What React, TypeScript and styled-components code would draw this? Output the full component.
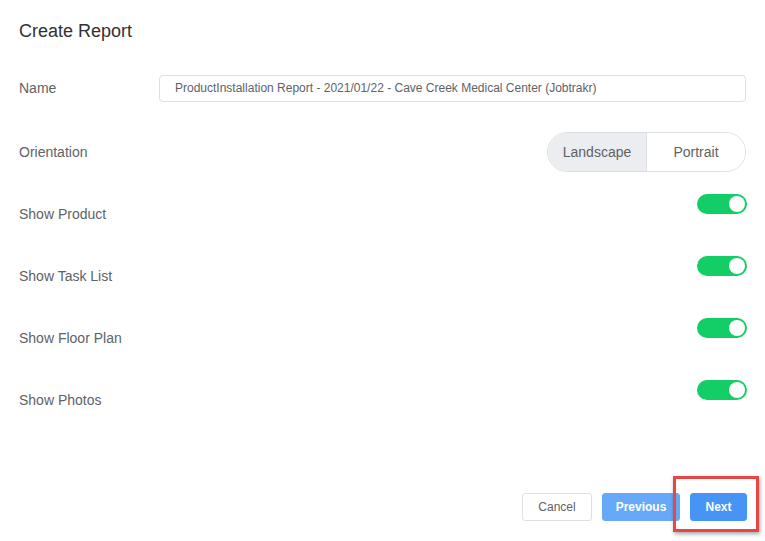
import styled, { createGlobalStyle } from 'styled-components';

const GlobalStyle = createGlobalStyle`
  html, body {
    margin: 0;
    padding: 0;
    background: #fff;
    font-family: "Liberation Sans", Arial, sans-serif;
  }
`

const Page = styled.div`
  position: relative;
  width: 765px;
  height: 541px;
  box-sizing: border-box;
  padding: 20px 19px 0 19px;
  display: flex;
  flex-direction: column;
  overflow: hidden;
`

const Title = styled.h1`
  margin: 0;
  font-size: 18px;
  font-weight: normal;
  color: #303133;
  line-height: 22px;
`

const Form = styled.div`
  margin-top: 26px;
  display: flex;
  flex-direction: column;
`

const Row = styled.div<{ $gap: number; $top?: boolean }>`
  display: flex;
  justify-content: space-between;
  align-items: ${(p) => (p.$top ? 'flex-start' : 'center')};
  height: 40px;
  margin-bottom: ${(p) => p.$gap}px;
`

const Label = styled.label`
  width: 140px;
  font-size: 14px;
  color: #606266;
  line-height: 40px;
  align-self: center;
`

const Input = styled.input`
  flex: 1;
  height: 27px;
  box-sizing: border-box;
  border: 1px solid #dcdfe6;
  border-radius: 4px;
  padding: 0 15px;
  font-family: inherit;
  font-size: 12px;
  color: #606266;
  outline: none;
`

const Segmented = styled.div`
  display: flex;
  height: 40px;
  width: 199px;
  box-sizing: border-box;
  border: 1px solid #dcdfe6;
  border-radius: 20px;
  overflow: hidden;
`

const Segment = styled.div<{ $active: boolean }>`
  flex: 1;
  display: flex;
  align-items: center;
  justify-content: center;
  font-size: 14px;
  color: #606266;
  background: ${(p) => (p.$active ? '#fff' : '#ebedf0')};
  border-left: ${(p) => (p.$active ? '1px solid #dcdfe6' : 'none')};
`

const Switch = styled.div<{ $on: boolean }>`
  width: 50px;
  height: 20px;
  border-radius: 10px;
  background: ${(p) => (p.$on ? '#13ce66' : '#dcdfe6')};
  position: relative;
  margin-right: -1px;
  &::after {
    content: '';
    position: absolute;
    top: 2px;
    left: ${(p) => (p.$on ? '32px' : '2px')};
    width: 16px;
    height: 16px;
    border-radius: 50%;
    background: #fff;
  }
`

const Footer = styled.div`
  margin-top: auto;
  margin-bottom: 20px;
  display: flex;
  justify-content: flex-end;
  gap: 10px;
  margin-right: -1px;
`

const Button = styled.button<{ $variant: 'default' | 'light' | 'primary' }>`
  height: 28px;
  box-sizing: border-box;
  padding: 0;
  border-radius: 3px;
  font-family: inherit;
  font-size: 12px;
  cursor: pointer;
  border: 1px solid
    ${(p) => (p.$variant === 'default' ? '#dcdfe6' : p.$variant === 'light' ? '#66a9f8' : '#4594f6')};
  background: ${(p) => (p.$variant === 'default' ? '#fff' : p.$variant === 'light' ? '#66a9f8' : '#4594f6')};
  color: ${(p) => (p.$variant === 'default' ? '#606266' : '#fff')};
  font-weight: ${(p) => (p.$variant === 'default' ? 'normal' : 'bold')};
  width: ${(p) => (p.$variant === 'light' ? '78px' : p.$variant === 'primary' ? '57px' : '70px')};
`

const Highlight = styled.div`
  position: absolute;
  left: 673px;
  top: 476px;
  width: 86px;
  height: 56px;
  box-sizing: border-box;
  border: 3px solid #e84545;
  box-shadow: 1px 2px 4px rgba(0, 0, 0, 0.35);
  pointer-events: none;
`

const toggles = ['Show Product', 'Show Task List', 'Show Floor Plan', 'Show Photos']

function App() {
  return (
    <>
      <GlobalStyle />
      <Page>
        <Title>Create Report</Title>
        <Form>
          <Row $gap={24}>
            <Label>Name</Label>
            <Input
              readOnly
              value="ProductInstallation Report - 2021/01/22 - Cave Creek Medical Center (Jobtrakr)"
            />
          </Row>
          <Row $gap={22}>
            <Label>Orientation</Label>
            <Segmented>
              <Segment $active={false}>Landscape</Segment>
              <Segment $active={true}>Portrait</Segment>
            </Segmented>
          </Row>
          {toggles.map((t) => (
            <Row key={t} $gap={22} $top>
              <Label>{t}</Label>
              <Switch $on={true} />
            </Row>
          ))}
        </Form>
        <Footer>
          <Button $variant="default">Cancel</Button>
          <Button $variant="light">Previous</Button>
          <Button $variant="primary">Next</Button>
        </Footer>
        <Highlight />
      </Page>
    </>
  )
}

export default App;
